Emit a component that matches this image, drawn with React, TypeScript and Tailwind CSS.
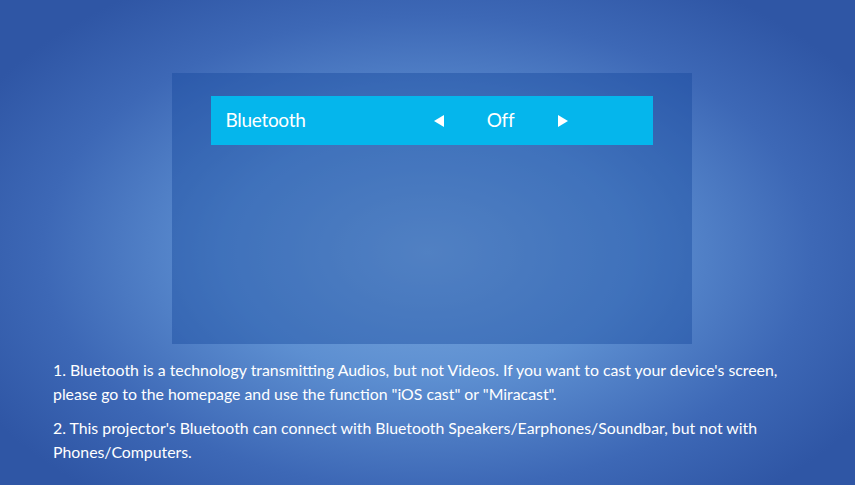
import React from 'react';

const notes = [
  '1. Bluetooth is a technology transmitting Audios, but not Videos. If you want to cast your device\'s screen, please go to the homepage and use the function "iOS cast" or "Miracast".',
  "2. This projector's Bluetooth can connect with Bluetooth Speakers/Earphones/Soundbar, but not with Phones/Computers.",
];

export default function App() {
  return (
    <div
      className="w-[855px] h-[485px] overflow-hidden flex flex-col items-center bg-[radial-gradient(ellipse_60%_65%_at_50%_52%,#7aa8de_0%,#5d8fd1_40%,#3d68b6_75%,#2f56a5_100%)] font-['Lato',sans-serif] text-white"
    >
      <div className="mt-[73px] ml-[8px] w-[520px] h-[271px] bg-[#15479c]/40 pt-[23px] flex flex-col items-center">
        <div className="w-[442px] h-[49px] bg-[#05b6ec] flex items-center pl-[15px] text-[19px] tracking-[-0.3px]">
          <span className="w-[208px]">Bluetooth</span>
          <span className="w-0 h-0 border-y-[6px] border-y-transparent border-r-[10px] border-r-white" />
          <span className="w-[114px] text-center">Off</span>
          <span className="w-0 h-0 border-y-[6px] border-y-transparent border-l-[10px] border-l-white" />
        </div>
      </div>
      <div className="self-stretch pl-[53px] pr-[60px] pt-[14px] text-[15.85px] leading-[23.5px] flex flex-col gap-[11px]">
        {notes.map((n) => (
          <p key={n}>{n}</p>
        ))}
      </div>
    </div>
  );
}
